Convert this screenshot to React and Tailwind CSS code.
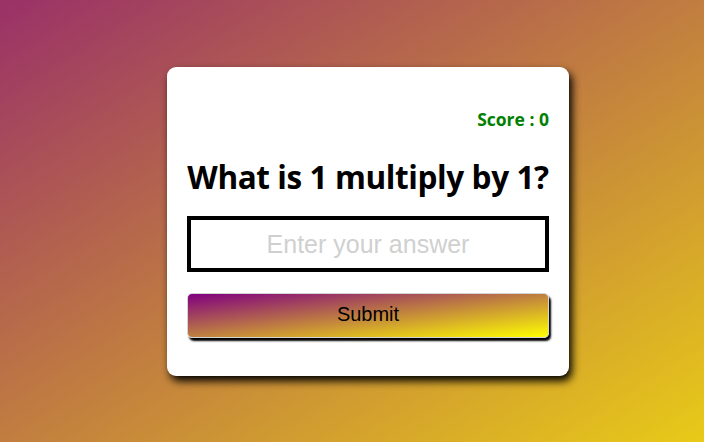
import React, { useState } from 'react';

function App() {
  const [answer, setAnswer] = useState('');
  const score = 0;

  return (
    <div className="min-h-screen w-full flex justify-center pt-[67px] bg-linear-to-br/srgb from-[#9a3168] to-[#e8ca18] font-['Open_Sans',sans-serif]">
      <div className="ml-[32px] w-[402px] h-[309px] self-start bg-white rounded-[9px] p-5 shadow-[3px_5px_9px_#000]">
        <div className="mt-5 text-right text-[17.5px] leading-6 font-bold text-[#008000]">Score : {score}</div>
        <h1 className="mt-[28px] text-center text-[31.5px] leading-9 font-bold text-black tracking-[-0.4px]">What is 1 multiply by 1?</h1>
        <input
          value={answer}
          onChange={e => setAnswer(e.target.value)}
          placeholder="Enter your answer"
          className="mt-[21px] block w-full h-[56px] border-4 border-black bg-white text-center text-[25px] font-['Liberation_Sans',Arial,sans-serif] placeholder:text-[#d0d0d0] outline-none"
        />
        <button className="mt-[21px] block w-full h-[45px] pb-[3px] rounded-[5px] border border-[#d4d4d4] bg-linear-to-br/srgb from-[#800080] to-[#ffff00] text-[20px] text-black font-['Liberation_Sans',Arial,sans-serif] shadow-[2px_3px_2px_#000]">
          Submit
        </button>
      </div>
    </div>
  );
}

export default App;
